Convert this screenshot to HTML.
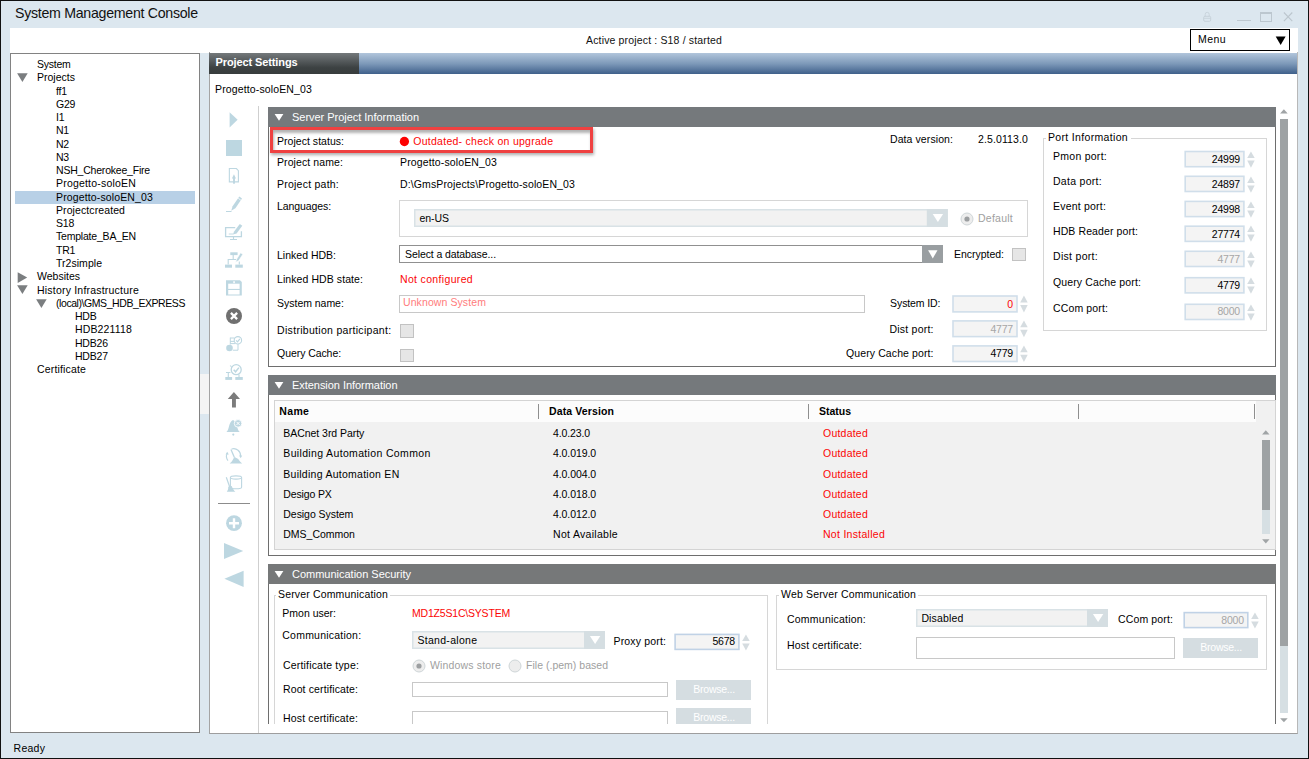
<!DOCTYPE html>
<html><head><meta charset="utf-8"><title>System Management Console</title>
<style>
html,body{margin:0;padding:0;}
body{width:1309px;height:759px;overflow:hidden;position:relative;background:#dce7ef;font-family:"Liberation Sans",sans-serif;}
div,svg{position:absolute;box-sizing:border-box;}
.t{white-space:nowrap;}
</style></head><body>
<div style="left:0px;top:0px;width:1309px;height:759px;background:#dce7ef;"></div>
<div style="left:0px;top:0px;width:1309px;height:1.1px;background:#111;"></div>
<div style="left:0px;top:0px;width:1.3px;height:759px;background:#111;"></div>
<div style="left:1307.6px;top:0px;width:1.4px;height:759px;background:#111;"></div>
<div style="left:0px;top:757.6px;width:1309px;height:1.4px;background:#111;"></div>
<div style="left:10px;top:28px;width:1288px;height:25px;background:#fff;"></div>
<div class="t" style="top:6.28px;line-height:14px;font-size:14.2px;letter-spacing:-0.289px;color:#111;left:15px;">System Management Console</div>
<div class="t" style="top:32.96px;line-height:14px;font-size:10.5px;letter-spacing:0.156px;color:#111;left:586px;">Active project : S18 / started</div>
<div style="left:1190px;top:29px;width:100px;height:22px;background:#fff;border:1px solid #000;"></div>
<div class="t" style="top:31.86px;line-height:14px;font-size:10.5px;letter-spacing:0.433px;color:#000;left:1198px;">Menu</div>
<svg style="left:1275px;top:35.5px" width="12" height="10" viewBox="0 0 12 10"><path d="M0.7 0.4 L10.6 0.4 L5.65 9 Z" fill="#000"/></svg>
<svg style="left:1202px;top:11px" width="11" height="12" viewBox="0 0 11 12"><rect x="1.7" y="5.3" width="7" height="5" rx="1.2" fill="none" stroke="#c7d2da" stroke-width="1"/><path d="M3.2 5.3 V3.4 a2 2.1 0 0 1 4 0 V5.3 M1.7 7.3 H8.7" fill="none" stroke="#c7d2da" stroke-width="0.9"/></svg>
<div style="left:1237.2px;top:19.6px;width:13.6px;height:1.9px;background:#bec8d0;"></div>
<div style="left:1259.8px;top:12.3px;width:12.1px;height:9.3px;border:1px solid #bcc7cf;border-top-width:2.4px;"></div>
<svg style="left:1283px;top:12px" width="11" height="11" viewBox="0 0 11 11"><path d="M0.9 0.5 L9.3 9.2 M9.3 0.5 L0.9 9.2" stroke="#bcc6ce" stroke-width="1.1" fill="none"/></svg>
<div style="left:10px;top:53px;width:190px;height:680px;background:#fff;border:1px solid #828282;"></div>
<div class="t" style="top:56.96px;line-height:14px;font-size:10.5px;letter-spacing:-0.251px;color:#000;left:37px;">System</div>
<div class="t" style="top:70.23px;line-height:14px;font-size:10.5px;letter-spacing:0.009px;color:#000;left:37px;">Projects</div>
<svg style="left:17px;top:73.07px" width="12" height="10" viewBox="0 0 12 10"><path d="M0.1 0.2 L10.7 0.2 L5.4 9.1 Z" fill="#7b7e80"/></svg>
<div class="t" style="top:83.50px;line-height:14px;font-size:10.5px;letter-spacing:-0.220px;color:#000;left:56px;">ff1</div>
<div class="t" style="top:96.77px;line-height:14px;font-size:10.5px;letter-spacing:-0.220px;color:#000;left:56px;">G29</div>
<div class="t" style="top:110.04px;line-height:14px;font-size:10.5px;letter-spacing:-0.220px;color:#000;left:56px;">I1</div>
<div class="t" style="top:123.31px;line-height:14px;font-size:10.5px;letter-spacing:-0.220px;color:#000;left:56px;">N1</div>
<div class="t" style="top:136.58px;line-height:14px;font-size:10.5px;letter-spacing:-0.220px;color:#000;left:56px;">N2</div>
<div class="t" style="top:149.85px;line-height:14px;font-size:10.5px;letter-spacing:-0.220px;color:#000;left:56px;">N3</div>
<div class="t" style="top:163.12px;line-height:14px;font-size:10.5px;letter-spacing:-0.204px;color:#000;left:56px;">NSH_Cherokee_Fire</div>
<div class="t" style="top:176.39px;line-height:14px;font-size:10.5px;letter-spacing:0.197px;color:#000;left:56px;">Progetto-soloEN</div>
<div style="left:15px;top:190.89999999999998px;width:180.2px;height:13.1px;background:#b8d0e6;"></div>
<div class="t" style="top:189.66px;line-height:14px;font-size:10.5px;letter-spacing:0.136px;color:#000;left:56px;">Progetto-soloEN_03</div>
<div class="t" style="top:202.93px;line-height:14px;font-size:10.5px;letter-spacing:0.093px;color:#000;left:56px;">Projectcreated</div>
<div class="t" style="top:216.20px;line-height:14px;font-size:10.5px;letter-spacing:-0.220px;color:#000;left:56px;">S18</div>
<div class="t" style="top:229.47px;line-height:14px;font-size:10.5px;letter-spacing:-0.206px;color:#000;left:56px;">Template_BA_EN</div>
<div class="t" style="top:242.74px;line-height:14px;font-size:10.5px;letter-spacing:-0.220px;color:#000;left:56px;">TR1</div>
<div class="t" style="top:256.01px;line-height:14px;font-size:10.5px;letter-spacing:0.033px;color:#000;left:56px;">Tr2simple</div>
<div class="t" style="top:269.28px;line-height:14px;font-size:10.5px;letter-spacing:0.001px;color:#000;left:37px;">Websites</div>
<svg style="left:17px;top:272.31999999999994px" width="11" height="12" viewBox="0 0 11 12"><path d="M0.7 0.2 L10.2 5.5 L0.7 10.9 Z" fill="#7b7e80"/></svg>
<div class="t" style="top:282.55px;line-height:14px;font-size:10.5px;letter-spacing:0.207px;color:#000;left:37px;">History Infrastructure</div>
<svg style="left:17px;top:285.39px" width="12" height="10" viewBox="0 0 12 10"><path d="M0.1 0.2 L10.7 0.2 L5.4 9.1 Z" fill="#7b7e80"/></svg>
<div class="t" style="top:295.82px;line-height:14px;font-size:10.5px;letter-spacing:-0.430px;color:#000;left:56px;">(local)\GMS_HDB_EXPRESS</div>
<svg style="left:36px;top:298.65999999999997px" width="12" height="10" viewBox="0 0 12 10"><path d="M0.1 0.2 L10.7 0.2 L5.4 9.1 Z" fill="#7b7e80"/></svg>
<div class="t" style="top:309.09px;line-height:14px;font-size:10.5px;letter-spacing:-0.220px;color:#000;left:75px;">HDB</div>
<div class="t" style="top:322.36px;line-height:14px;font-size:10.5px;letter-spacing:0.150px;color:#000;left:75px;">HDB221118</div>
<div class="t" style="top:335.63px;line-height:14px;font-size:10.5px;letter-spacing:-0.220px;color:#000;left:75px;">HDB26</div>
<div class="t" style="top:348.90px;line-height:14px;font-size:10.5px;letter-spacing:-0.220px;color:#000;left:75px;">HDB27</div>
<div class="t" style="top:362.17px;line-height:14px;font-size:10.5px;letter-spacing:0.158px;color:#000;left:37px;">Certificate</div>
<div style="left:200px;top:374px;width:9px;height:39.7px;background:#f4f4f4;"></div>
<div style="left:209px;top:52px;width:1089px;height:682px;background:#fff;border:1px solid #9e9e9e;border-top:none;border-left-color:#a4a4a4;border-right-color:#b8b8b8;"></div>
<div style="left:209px;top:52.5px;width:1088px;height:21.5px;background:linear-gradient(#b1c5db 0%,#7c98b8 52%,#3f608b 100%);"></div>
<div style="left:209px;top:52.5px;width:150px;height:21.5px;background:linear-gradient(#74797b 0%,#585d5f 35%,#3c4142 70%,#383d3d 100%);"></div>
<div class="t" style="top:55.39px;line-height:14px;font-size:11px;letter-spacing:-0.109px;color:#fff;font-weight:bold;left:215.5px;">Project Settings</div>
<div class="t" style="top:82.26px;line-height:14px;font-size:10.5px;letter-spacing:0.136px;color:#000;left:215px;">Progetto-soloEN_03</div>
<div style="left:258px;top:106px;width:1px;height:627px;background:#cfcfcf;"></div>
<div style="left:1280.2px;top:119px;width:7.7px;height:526.6px;background:#9ea2a4;"></div>
<div style="left:1280.2px;top:645.6px;width:7.7px;height:67px;background:#d6dfe3;"></div>
<svg style="left:1280px;top:108.6px" width="8" height="5" viewBox="0 0 8 5"><path d="M0.1 4.6 L3.9 0.3 L7.7 4.6 Z" fill="#a0a4a6"/></svg>
<svg style="left:1280px;top:718px" width="8" height="5" viewBox="0 0 8 5"><path d="M0.1 0.3 L3.9 4.3 L7.7 0.3 Z" fill="#a0a4a6"/></svg>
<div class="t" style="top:740.66px;line-height:14px;font-size:10.5px;letter-spacing:0.250px;color:#000;left:13.6px;">Ready</div>
<div style="left:268px;top:107px;width:1008px;height:20px;background:#75797c;"></div>
<svg style="left:274px;top:113px" width="11" height="9" viewBox="0 0 11 9"><path d="M0.6 1 L9.4 1 L5 7.8 Z" fill="#fff"/></svg>
<div class="t" style="top:109.89px;line-height:14px;font-size:11px;letter-spacing:-0.030px;color:#fff;left:292px;">Server Project Information</div>
<div style="left:268px;top:127px;width:1008px;height:240px;background:#fff;border:1px solid #6e6e6e;border-top:none;"></div>
<div style="left:270px;top:127px;width:323px;height:26px;background:#fff;border:3px solid #ef4141;box-shadow:inset 1px 3px 3px rgba(0,0,0,.30), 1px 2px 3px rgba(0,0,0,.32);"></div>
<div class="t" style="top:134.36px;line-height:14px;font-size:10.5px;letter-spacing:0.031px;color:#000;left:277px;">Project status:</div>
<svg style="left:399px;top:136px" width="11" height="11" viewBox="0 0 11 11"><circle cx="5.4" cy="5.5" r="4.65" fill="#fd0202"/></svg>
<div class="t" style="top:134.36px;line-height:14px;font-size:10.5px;letter-spacing:0.266px;color:#fb0505;left:413.3px;">Outdated- check on upgrade</div>
<div class="t" style="top:154.86px;line-height:14px;font-size:10.5px;letter-spacing:0.094px;color:#000;left:277px;">Project name:</div>
<div class="t" style="top:154.86px;line-height:14px;font-size:10.5px;letter-spacing:0.136px;color:#000;left:400px;">Progetto-soloEN_03</div>
<div class="t" style="top:176.76px;line-height:14px;font-size:10.5px;letter-spacing:0.235px;color:#000;left:277px;">Project path:</div>
<div class="t" style="top:176.76px;line-height:14px;font-size:10.5px;letter-spacing:0.122px;color:#000;left:400px;">D:\GmsProjects\Progetto-soloEN_03</div>
<div class="t" style="top:199.16px;line-height:14px;font-size:10.5px;letter-spacing:-0.089px;color:#000;left:277px;">Languages:</div>
<div style="left:399px;top:200px;width:628.5px;height:36.5px;background:#fff;border:1px solid #d6d6d6;"></div>
<svg style="left:414px;top:209px" width="534" height="18" viewBox="0 0 534 18"><rect x="0.00" y="0.00" width="533.80" height="18.00" fill="#d9e2e6"/><rect x="1.50" y="1.50" width="530.80" height="15.00" fill="#f2f2f2"/><rect x="512.80" y="0" width="21" height="18.00" fill="#d5dee2"/><path d="M518.70 5.00 L529.10 5.00 L523.90 13.00 Z" fill="#fff"/></svg>
<div class="t" style="top:211.06px;line-height:14px;font-size:10.5px;letter-spacing:-0.033px;color:#000;left:419.4px;">en-US</div>
<svg style="left:959.5px;top:211.5px" width="14" height="14" viewBox="0 0 14 14"><circle cx="7" cy="7" r="6" fill="#ededed" stroke="#cfd6d8" stroke-width="1"/><circle cx="7" cy="7" r="2.6" fill="#9c9fa1"/></svg>
<div class="t" style="top:211.36px;line-height:14px;font-size:10.5px;letter-spacing:0.247px;color:#a0a0a0;left:978px;">Default</div>
<div class="t" style="top:247.96px;line-height:14px;font-size:10.5px;letter-spacing:0.005px;color:#000;left:277px;">Linked HDB:</div>
<div style="left:399px;top:245px;width:544px;height:18px;background:#fff;border:1px solid #909090;"></div>
<div style="left:922.4px;top:245px;width:20.6px;height:18px;background:#999ea1;"></div>
<svg style="left:928px;top:249.6px" width="10" height="9" viewBox="0 0 10 9"><path d="M0.1 0.2 L9.5 0.2 L4.8 8.5 Z" fill="#fff"/></svg>
<div class="t" style="top:246.96px;line-height:14px;font-size:10.5px;letter-spacing:-0.091px;color:#000;left:405px;">Select a database...</div>
<div class="t" style="top:247.36px;line-height:14px;font-size:10.5px;letter-spacing:-0.019px;color:#000;left:954px;">Encrypted:</div>
<div style="left:1012px;top:248px;width:14px;height:13px;background:#e6e6e6;border:1px solid #c2c2c2;"></div>
<div class="t" style="top:272.16px;line-height:14px;font-size:10.5px;letter-spacing:0.081px;color:#000;left:277px;">Linked HDB state:</div>
<div class="t" style="top:272.16px;line-height:14px;font-size:10.5px;letter-spacing:0.336px;color:#fb0505;left:400px;">Not configured</div>
<div class="t" style="top:296.16px;line-height:14px;font-size:10.5px;letter-spacing:-0.034px;color:#000;left:277.1px;">System name:</div>
<div style="left:399px;top:295px;width:466px;height:17.5px;background:#fff;border:1px solid #c8c8c8;"></div>
<div class="t" style="top:295.36px;line-height:14px;font-size:10.5px;letter-spacing:0.093px;color:#ff7c7c;left:403px;">Unknown System</div>
<div class="t" style="top:296.26px;line-height:14px;font-size:10.5px;letter-spacing:-0.104px;color:#000;right:368.60px;">System ID:</div>
<svg style="left:952px;top:295px" width="66" height="18" viewBox="0 0 66 18"><rect x="0.20" y="0.20" width="65.60" height="17.50" fill="#d0deea"/><rect x="1.80" y="1.80" width="62.40" height="14.30" fill="#f4f4f4"/></svg>
<div class="t" style="top:297.16px;line-height:14px;font-size:10.5px;letter-spacing:-0.220px;color:#fb0505;right:296.02px;">0</div>
<svg style="left:1019.7px;top:295.2px" width="9" height="18.5" viewBox="0 0 9 18.5"><path d="M0.2 7.45 L3.95 0.5 L7.7 7.45 Z" fill="#d5dce0"/><path d="M0.2 9.95 L3.95 17.40 L7.7 9.95 Z" fill="#d5dce0"/></svg>
<div class="t" style="top:322.76px;line-height:14px;font-size:10.5px;letter-spacing:0.300px;color:#000;left:277.1px;">Distribution participant:</div>
<div style="left:400px;top:324px;width:14px;height:14px;background:#e6e6e6;border:1px solid #c2c2c2;"></div>
<div class="t" style="top:322.06px;line-height:14px;font-size:10.5px;letter-spacing:0.229px;color:#000;right:375.27px;">Dist port:</div>
<svg style="left:952px;top:320px" width="66" height="18" viewBox="0 0 66 18"><rect x="0.20" y="0.10" width="65.60" height="17.30" fill="#d0deea"/><rect x="1.80" y="1.70" width="62.40" height="14.10" fill="#f4f4f4"/></svg>
<div class="t" style="top:322.06px;line-height:14px;font-size:10.5px;letter-spacing:-0.220px;color:#a6a6a6;right:296.02px;">4777</div>
<svg style="left:1019.7px;top:320.1px" width="9" height="18.3" viewBox="0 0 9 18.3"><path d="M0.2 7.35 L3.95 0.5 L7.7 7.35 Z" fill="#d5dce0"/><path d="M0.2 9.85 L3.95 17.20 L7.7 9.85 Z" fill="#d5dce0"/></svg>
<div class="t" style="top:346.26px;line-height:14px;font-size:10.5px;letter-spacing:-0.073px;color:#000;left:277.1px;">Query Cache:</div>
<div style="left:400px;top:349px;width:14px;height:13px;background:#e6e6e6;border:1px solid #c2c2c2;"></div>
<div class="t" style="top:346.06px;line-height:14px;font-size:10.5px;letter-spacing:0.106px;color:#000;right:375.39px;">Query Cache port:</div>
<svg style="left:952px;top:345px" width="66" height="18" viewBox="0 0 66 18"><rect x="0.20" y="0.10" width="65.60" height="17.20" fill="#d0deea"/><rect x="1.80" y="1.70" width="62.40" height="14.00" fill="#f4f4f4"/></svg>
<div class="t" style="top:346.06px;line-height:14px;font-size:10.5px;letter-spacing:-0.220px;color:#000;right:296.02px;">4779</div>
<svg style="left:1019.7px;top:345.1px" width="9" height="18.2" viewBox="0 0 9 18.2"><path d="M0.2 7.30 L3.95 0.5 L7.7 7.30 Z" fill="#d5dce0"/><path d="M0.2 9.80 L3.95 17.10 L7.7 9.80 Z" fill="#d5dce0"/></svg>
<div class="t" style="top:131.66px;line-height:14px;font-size:10.5px;letter-spacing:0.087px;color:#000;left:890px;">Data version:</div>
<div class="t" style="top:131.66px;line-height:14px;font-size:10.5px;letter-spacing:0.115px;color:#000;left:978px;">2.5.0113.0</div>
<div style="left:1043px;top:138px;width:224px;height:193px;border:1px solid #d6d6d6;"></div>
<div style="left:1046px;top:131px;width:85px;height:12px;background:#fff;"></div>
<div class="t" style="top:129.86px;line-height:14px;font-size:10.5px;letter-spacing:0.331px;color:#000;left:1048px;">Port Information</div>
<div class="t" style="top:148.76px;line-height:14px;font-size:10.5px;letter-spacing:0.264px;color:#000;left:1053px;">Pmon port:</div>
<svg style="left:1184px;top:150px" width="61" height="18" viewBox="0 0 61 18"><rect x="0.40" y="0.70" width="60.30" height="16.80" fill="#d0deea"/><rect x="2.00" y="2.30" width="57.10" height="13.60" fill="#f4f4f4"/></svg>
<div class="t" style="top:152.26px;line-height:14px;font-size:10.5px;letter-spacing:-0.220px;color:#000;right:69.12px;">24999</div>
<svg style="left:1246.6000000000001px;top:150.70000000000002px" width="9" height="17.8" viewBox="0 0 9 17.8"><path d="M0.2 7.10 L3.95 0.5 L7.7 7.10 Z" fill="#d5dce0"/><path d="M0.2 9.60 L3.95 16.70 L7.7 9.60 Z" fill="#d5dce0"/></svg>
<div class="t" style="top:173.96px;line-height:14px;font-size:10.5px;letter-spacing:0.289px;color:#000;left:1053px;">Data port:</div>
<svg style="left:1184px;top:175px" width="61" height="18" viewBox="0 0 61 18"><rect x="0.40" y="0.50" width="60.30" height="16.80" fill="#d0deea"/><rect x="2.00" y="2.10" width="57.10" height="13.60" fill="#f4f4f4"/></svg>
<div class="t" style="top:177.26px;line-height:14px;font-size:10.5px;letter-spacing:-0.220px;color:#000;right:69.12px;">24897</div>
<svg style="left:1246.6000000000001px;top:175.5px" width="9" height="17.8" viewBox="0 0 9 17.8"><path d="M0.2 7.10 L3.95 0.5 L7.7 7.10 Z" fill="#d5dce0"/><path d="M0.2 9.60 L3.95 16.70 L7.7 9.60 Z" fill="#d5dce0"/></svg>
<div class="t" style="top:198.96px;line-height:14px;font-size:10.5px;letter-spacing:0.202px;color:#000;left:1053px;">Event port:</div>
<svg style="left:1184px;top:200px" width="61" height="18" viewBox="0 0 61 18"><rect x="0.40" y="0.60" width="60.30" height="16.80" fill="#d0deea"/><rect x="2.00" y="2.20" width="57.10" height="13.60" fill="#f4f4f4"/></svg>
<div class="t" style="top:201.86px;line-height:14px;font-size:10.5px;letter-spacing:-0.220px;color:#000;right:69.12px;">24998</div>
<svg style="left:1246.6000000000001px;top:200.6px" width="9" height="17.8" viewBox="0 0 9 17.8"><path d="M0.2 7.10 L3.95 0.5 L7.7 7.10 Z" fill="#d5dce0"/><path d="M0.2 9.60 L3.95 16.70 L7.7 9.60 Z" fill="#d5dce0"/></svg>
<div class="t" style="top:224.26px;line-height:14px;font-size:10.5px;letter-spacing:0.097px;color:#000;left:1053px;">HDB Reader port:</div>
<svg style="left:1184px;top:225px" width="61" height="18" viewBox="0 0 61 18"><rect x="0.40" y="0.40" width="60.30" height="16.80" fill="#d0deea"/><rect x="2.00" y="2.00" width="57.10" height="13.60" fill="#f4f4f4"/></svg>
<div class="t" style="top:227.16px;line-height:14px;font-size:10.5px;letter-spacing:-0.220px;color:#000;right:69.12px;">27774</div>
<svg style="left:1246.6000000000001px;top:225.4px" width="9" height="17.8" viewBox="0 0 9 17.8"><path d="M0.2 7.10 L3.95 0.5 L7.7 7.10 Z" fill="#d5dce0"/><path d="M0.2 9.60 L3.95 16.70 L7.7 9.60 Z" fill="#d5dce0"/></svg>
<div class="t" style="top:249.36px;line-height:14px;font-size:10.5px;letter-spacing:0.299px;color:#000;left:1053px;">Dist port:</div>
<svg style="left:1184px;top:250px" width="61" height="18" viewBox="0 0 61 18"><rect x="0.40" y="0.50" width="60.30" height="16.80" fill="#d0deea"/><rect x="2.00" y="2.10" width="57.10" height="13.60" fill="#f4f4f4"/></svg>
<div class="t" style="top:252.26px;line-height:14px;font-size:10.5px;letter-spacing:-0.220px;color:#a6a6a6;right:69.12px;">4777</div>
<svg style="left:1246.6000000000001px;top:250.5px" width="9" height="17.8" viewBox="0 0 9 17.8"><path d="M0.2 7.10 L3.95 0.5 L7.7 7.10 Z" fill="#d5dce0"/><path d="M0.2 9.60 L3.95 16.70 L7.7 9.60 Z" fill="#d5dce0"/></svg>
<div class="t" style="top:275.36px;line-height:14px;font-size:10.5px;letter-spacing:0.130px;color:#000;left:1053px;">Query Cache port:</div>
<svg style="left:1184px;top:276px" width="61" height="18" viewBox="0 0 61 18"><rect x="0.40" y="0.90" width="60.30" height="16.80" fill="#d0deea"/><rect x="2.00" y="2.50" width="57.10" height="13.60" fill="#f4f4f4"/></svg>
<div class="t" style="top:277.96px;line-height:14px;font-size:10.5px;letter-spacing:-0.220px;color:#000;right:69.12px;">4779</div>
<svg style="left:1246.6000000000001px;top:276.9px" width="9" height="17.8" viewBox="0 0 9 17.8"><path d="M0.2 7.10 L3.95 0.5 L7.7 7.10 Z" fill="#d5dce0"/><path d="M0.2 9.60 L3.95 16.70 L7.7 9.60 Z" fill="#d5dce0"/></svg>
<div class="t" style="top:301.06px;line-height:14px;font-size:10.5px;letter-spacing:0.132px;color:#000;left:1053px;">CCom port:</div>
<svg style="left:1184px;top:303px" width="61" height="18" viewBox="0 0 61 18"><rect x="0.40" y="0.50" width="60.30" height="16.80" fill="#d0deea"/><rect x="2.00" y="2.10" width="57.10" height="13.60" fill="#f4f4f4"/></svg>
<div class="t" style="top:303.76px;line-height:14px;font-size:10.5px;letter-spacing:-0.220px;color:#a6a6a6;right:69.12px;">8000</div>
<svg style="left:1246.6000000000001px;top:303.5px" width="9" height="17.8" viewBox="0 0 9 17.8"><path d="M0.2 7.10 L3.95 0.5 L7.7 7.10 Z" fill="#d5dce0"/><path d="M0.2 9.60 L3.95 16.70 L7.7 9.60 Z" fill="#d5dce0"/></svg>
<div style="left:268px;top:375px;width:1008px;height:20px;background:#75797c;"></div>
<svg style="left:274px;top:381px" width="11" height="9" viewBox="0 0 11 9"><path d="M0.6 1 L9.4 1 L5 7.8 Z" fill="#fff"/></svg>
<div class="t" style="top:377.89px;line-height:14px;font-size:11px;letter-spacing:-0.043px;color:#fff;left:292px;">Extension Information</div>
<div style="left:268px;top:395px;width:1008px;height:161px;background:#fff;border:1px solid #6e6e6e;border-top:none;"></div>
<div style="left:274px;top:400px;width:1001.5px;height:149.5px;background:#f1f1f1;border:1px solid #d4d4d4;"></div>
<div style="left:275px;top:401px;width:980.5px;height:21px;background:#fcfcfc;"></div>
<div style="left:538px;top:404px;width:1px;height:15px;background:#8f8f8f;"></div>
<div style="left:808px;top:404px;width:1px;height:15px;background:#8f8f8f;"></div>
<div style="left:1078px;top:404px;width:1px;height:15px;background:#8f8f8f;"></div>
<div style="left:1254px;top:404px;width:1px;height:15px;background:#8f8f8f;"></div>
<div class="t" style="top:404.36px;line-height:14px;font-size:10.5px;letter-spacing:0.350px;color:#000;font-weight:bold;left:279.3px;">Name</div>
<div class="t" style="top:404.36px;line-height:14px;font-size:10.5px;letter-spacing:0.116px;color:#000;font-weight:bold;left:549px;">Data Version</div>
<div class="t" style="top:404.36px;line-height:14px;font-size:10.5px;letter-spacing:-0.015px;color:#000;font-weight:bold;left:819px;">Status</div>
<div class="t" style="top:426.26px;line-height:14px;font-size:10.5px;letter-spacing:-0.044px;color:#000;left:283.3px;">BACnet 3rd Party</div>
<div class="t" style="top:426.26px;line-height:14px;font-size:10.5px;letter-spacing:-0.119px;color:#000;left:553px;">4.0.23.0</div>
<div class="t" style="top:426.26px;line-height:14px;font-size:10.5px;letter-spacing:0.225px;color:#fb0505;left:823px;">Outdated</div>
<div class="t" style="top:446.16px;line-height:14px;font-size:10.5px;letter-spacing:0.345px;color:#000;left:283.3px;">Building Automation Common</div>
<div class="t" style="top:446.16px;line-height:14px;font-size:10.5px;letter-spacing:-0.088px;color:#000;left:553px;">4.0.019.0</div>
<div class="t" style="top:446.16px;line-height:14px;font-size:10.5px;letter-spacing:0.225px;color:#fb0505;left:823px;">Outdated</div>
<div class="t" style="top:466.86px;line-height:14px;font-size:10.5px;letter-spacing:0.267px;color:#000;left:283.3px;">Building Automation EN</div>
<div class="t" style="top:466.86px;line-height:14px;font-size:10.5px;letter-spacing:-0.088px;color:#000;left:553px;">4.0.004.0</div>
<div class="t" style="top:466.86px;line-height:14px;font-size:10.5px;letter-spacing:0.225px;color:#fb0505;left:823px;">Outdated</div>
<div class="t" style="top:487.16px;line-height:14px;font-size:10.5px;letter-spacing:-0.134px;color:#000;left:283.3px;">Desigo PX</div>
<div class="t" style="top:487.16px;line-height:14px;font-size:10.5px;letter-spacing:-0.088px;color:#000;left:553px;">4.0.018.0</div>
<div class="t" style="top:487.16px;line-height:14px;font-size:10.5px;letter-spacing:0.225px;color:#fb0505;left:823px;">Outdated</div>
<div class="t" style="top:507.36px;line-height:14px;font-size:10.5px;letter-spacing:-0.047px;color:#000;left:283.3px;">Desigo System</div>
<div class="t" style="top:507.36px;line-height:14px;font-size:10.5px;letter-spacing:-0.088px;color:#000;left:553px;">4.0.012.0</div>
<div class="t" style="top:507.36px;line-height:14px;font-size:10.5px;letter-spacing:0.225px;color:#fb0505;left:823px;">Outdated</div>
<div class="t" style="top:527.06px;line-height:14px;font-size:10.5px;letter-spacing:-0.017px;color:#000;left:283.3px;">DMS_Common</div>
<div class="t" style="top:527.06px;line-height:14px;font-size:10.5px;letter-spacing:0.300px;color:#000;left:553px;">Not Available</div>
<div class="t" style="top:527.06px;line-height:14px;font-size:10.5px;letter-spacing:0.280px;color:#fb0505;left:823px;">Not Installed</div>
<div style="left:1262px;top:440px;width:7.6px;height:69.5px;background:#9ea2a4;"></div>
<div style="left:1262px;top:509.5px;width:7.6px;height:24.3px;background:#d6dfe3;"></div>
<svg style="left:1262px;top:429.6px" width="8" height="5" viewBox="0 0 8 5"><path d="M0.1 4.4 L3.8 0.3 L7.5 4.4 Z" fill="#a0a4a6"/></svg>
<svg style="left:1262px;top:538.6px" width="8" height="5" viewBox="0 0 8 5"><path d="M0.1 0.3 L3.8 4.4 L7.5 0.3 Z" fill="#a0a4a6"/></svg>
<div style="left:268px;top:564px;width:1008px;height:20px;background:#767879;"></div>
<svg style="left:274px;top:570px" width="11" height="9" viewBox="0 0 11 9"><path d="M0.6 1 L9.4 1 L5 7.8 Z" fill="#fff"/></svg>
<div class="t" style="top:566.89px;line-height:14px;font-size:11px;letter-spacing:-0.010px;color:#fff;left:292px;">Communication Security</div>
<div style="left:268px;top:584px;width:1px;height:140.3px;background:#6e6e6e;"></div>
<div style="left:1275px;top:584px;width:1px;height:140.3px;background:#6e6e6e;"></div>
<div style="left:273.6px;top:595px;width:494.4px;height:130px;border:1px solid #d6d6d6;border-bottom:none;"></div>
<div style="left:276px;top:588px;width:114px;height:12px;background:#fff;"></div>
<div class="t" style="top:587.36px;line-height:14px;font-size:10.5px;letter-spacing:0.160px;color:#000;left:278px;">Server Communication</div>
<div class="t" style="top:605.76px;line-height:14px;font-size:10.5px;letter-spacing:0.001px;color:#000;left:282.3px;">Pmon user:</div>
<div class="t" style="top:606.16px;line-height:14px;font-size:10.5px;letter-spacing:-0.196px;color:#fb0505;left:412px;">MD1Z5S1C\SYSTEM</div>
<div class="t" style="top:627.86px;line-height:14px;font-size:10.5px;letter-spacing:0.224px;color:#000;left:282.3px;">Communication:</div>
<svg style="left:412px;top:631px" width="193" height="18" viewBox="0 0 193 18"><rect x="0.00" y="0.00" width="193.00" height="18.00" fill="#d9e2e6"/><rect x="1.50" y="1.50" width="190.00" height="15.00" fill="#f2f2f2"/><rect x="172.00" y="0" width="21" height="18.00" fill="#d5dee2"/><path d="M177.90 5.00 L188.30 5.00 L183.10 13.00 Z" fill="#fff"/></svg>
<div class="t" style="top:633.06px;line-height:14px;font-size:10.5px;letter-spacing:0.306px;color:#000;left:417.4px;">Stand-alone</div>
<div class="t" style="top:633.66px;line-height:14px;font-size:10.5px;letter-spacing:0.176px;color:#000;left:613.5px;">Proxy port:</div>
<svg style="left:674px;top:633px" width="66" height="18" viewBox="0 0 66 18"><rect x="0.30" y="0.60" width="65.40" height="16.60" fill="#c0d2e6"/><rect x="1.90" y="2.20" width="62.20" height="13.40" fill="#f4f4f4"/></svg>
<div class="t" style="top:633.86px;line-height:14px;font-size:10.5px;letter-spacing:-0.220px;color:#000;right:574.12px;">5678</div>
<svg style="left:741.5999999999999px;top:633.6px" width="9" height="17.6" viewBox="0 0 9 17.6"><path d="M0.2 7.00 L3.95 0.5 L7.7 7.00 Z" fill="#d5dce0"/><path d="M0.2 9.50 L3.95 16.50 L7.7 9.50 Z" fill="#d5dce0"/></svg>
<div class="t" style="top:657.96px;line-height:14px;font-size:10.5px;letter-spacing:0.180px;color:#000;left:283px;">Certificate type:</div>
<svg style="left:411.5px;top:658.5px" width="14" height="14" viewBox="0 0 14 14"><circle cx="7" cy="7" r="6" fill="#ededed" stroke="#cfd6d8" stroke-width="1"/><circle cx="7" cy="7" r="2.6" fill="#9c9fa1"/></svg>
<div class="t" style="top:657.96px;line-height:14px;font-size:10.5px;letter-spacing:0.165px;color:#a0a0a0;left:430px;">Windows store</div>
<svg style="left:507.5px;top:658.5px" width="14" height="14" viewBox="0 0 14 14"><circle cx="7" cy="7" r="6" fill="#ededed" stroke="#cfd6d8" stroke-width="1"/></svg>
<div class="t" style="top:657.96px;line-height:14px;font-size:10.5px;letter-spacing:0.018px;color:#a0a0a0;left:526px;">File (.pem) based</div>
<div class="t" style="top:681.96px;line-height:14px;font-size:10.5px;letter-spacing:0.121px;color:#000;left:283px;">Root certificate:</div>
<div style="left:412px;top:682px;width:256px;height:15px;background:#fff;border:1px solid #c8c8c8;"></div>
<div style="left:676px;top:680px;width:75px;height:20px;background:#d5dde1;"></div>
<div class="t" style="top:682.36px;line-height:14px;font-size:10.5px;letter-spacing:-0.252px;color:#fff;left:693.3px;">Browse...</div>
<div class="t" style="top:710.86px;line-height:14px;font-size:10.5px;letter-spacing:0.155px;color:#000;left:283px;">Host certificate:</div>
<div style="left:412px;top:711px;width:256px;height:15px;background:#fff;border:1px solid #c8c8c8;border-bottom:none;height:14px;"></div>
<div style="left:676px;top:708px;width:75px;height:20px;background:#d5dde1;"></div>
<div class="t" style="top:710.36px;line-height:14px;font-size:10.5px;letter-spacing:-0.252px;color:#fff;left:693.3px;">Browse...</div>
<div style="left:776px;top:595px;width:491px;height:74.5px;border:1px solid #d6d6d6;"></div>
<div style="left:779px;top:588px;width:139px;height:12px;background:#fff;"></div>
<div class="t" style="top:587.36px;line-height:14px;font-size:10.5px;letter-spacing:0.162px;color:#000;left:781px;">Web Server Communication</div>
<div class="t" style="top:612.16px;line-height:14px;font-size:10.5px;letter-spacing:0.224px;color:#000;left:787px;">Communication:</div>
<svg style="left:916px;top:609px" width="192" height="18" viewBox="0 0 192 18"><rect x="0.00" y="0.00" width="192.00" height="18.00" fill="#d9e2e6"/><rect x="1.50" y="1.50" width="189.00" height="15.00" fill="#f2f2f2"/><rect x="171.00" y="0" width="21" height="18.00" fill="#d5dee2"/><path d="M176.90 5.00 L187.30 5.00 L182.10 13.00 Z" fill="#fff"/></svg>
<div class="t" style="top:611.06px;line-height:14px;font-size:10.5px;letter-spacing:0.143px;color:#000;left:921.4px;">Disabled</div>
<div class="t" style="top:612.16px;line-height:14px;font-size:10.5px;letter-spacing:0.132px;color:#000;left:1118px;">CCom port:</div>
<svg style="left:1183px;top:611px" width="66" height="18" viewBox="0 0 66 18"><rect x="0.40" y="0.80" width="65.20" height="16.60" fill="#c0d2e6"/><rect x="2.00" y="2.40" width="62.00" height="13.40" fill="#f4f4f4"/></svg>
<div class="t" style="top:613.06px;line-height:14px;font-size:10.5px;letter-spacing:-0.220px;color:#a6a6a6;right:65.22px;">8000</div>
<svg style="left:1250.5000000000002px;top:611.8px" width="9" height="17.6" viewBox="0 0 9 17.6"><path d="M0.2 7.00 L3.95 0.5 L7.7 7.00 Z" fill="#d5dce0"/><path d="M0.2 9.50 L3.95 16.50 L7.7 9.50 Z" fill="#d5dce0"/></svg>
<div class="t" style="top:637.96px;line-height:14px;font-size:10.5px;letter-spacing:0.155px;color:#000;left:787px;">Host certificate:</div>
<div style="left:916px;top:637px;width:259px;height:22px;background:#fff;border:1px solid #c8c8c8;"></div>
<div style="left:1183px;top:638px;width:75px;height:20px;background:#d5dde1;"></div>
<div class="t" style="top:640.36px;line-height:14px;font-size:10.5px;letter-spacing:-0.252px;color:#fff;left:1200.3px;">Browse...</div>
<div style="left:259px;top:724.3px;width:1020px;height:8.7px;background:#fff;"></div>
<div style="left:218px;top:503px;width:32px;height:1px;background:#8c8c8c;"></div>
<svg style="left:222px;top:108px" width="24" height="24" viewBox="0 0 24 24"><path d="M7.6 4.2 L15.6 11.8 L7.6 19.4 Z" fill="#bdd7e1"/></svg>
<div style="left:226px;top:140px;width:16px;height:16px;background:#bdd7e1;"></div>
<svg style="left:222px;top:164px" width="24" height="24" viewBox="0 0 24 24"><path d="M7.35 4.5 H14.4 L16.4 6.6 V17.9 H7.35 Z" fill="none" stroke="#bdd7e1" stroke-width="1.1"/><path d="M9.9 14.6 L11.95 10.2 L14 14.6 Z" fill="#bdd7e1"/><rect x="11.05" y="14" width="1.9" height="5.7" fill="#bdd7e1"/></svg>
<svg style="left:222px;top:192px" width="24" height="24" viewBox="0 0 24 24"><path d="M4 19.5 H9.5" stroke="#bdd7e1" stroke-width="1"/><path d="M9.2 18.8 L10.6 14.2 L17.3 4.6 L20 6.6 L13.4 16.2 Z" fill="#bdd7e1"/><path d="M16.2 6.2 L18.9 8.2" stroke="#fff" stroke-width="0.8"/></svg>
<svg style="left:222px;top:220px" width="24" height="24" viewBox="0 0 24 24"><path d="M13.2 7.7 H3.6 V16.7 H19.4 V11.2" fill="none" stroke="#bdd7e1" stroke-width="1.3"/><path d="M11.5 16.7 V19.2 M8 19.5 H15" stroke="#bdd7e1" stroke-width="1.1"/><path d="M6.8 14 H11.2" stroke="#bdd7e1" stroke-width="0.9"/><path d="M10.9 14.6 L12.1 11.6 L17.8 3.9 L20.3 5.8 L14.6 13.5 Z" fill="#bdd7e1"/></svg>
<svg style="left:222px;top:248px" width="24" height="24" viewBox="0 0 24 24"><rect x="8.3" y="4.3" width="7.3" height="2.8" fill="#bdd7e1"/><path d="M11.2 7 V11.5 M6.2 16.6 V11.5 H14 M17.3 16.6 V13.5" fill="none" stroke="#bdd7e1" stroke-width="1.1"/><rect x="3" y="16.6" width="7" height="3.1" fill="#bdd7e1"/><rect x="13.3" y="16.6" width="7.5" height="3.1" fill="#bdd7e1"/><path d="M13.6 14.2 L14.6 11.2 L18.6 4.8 L20.8 6.3 L16.8 12.6 Z" fill="#bdd7e1" stroke="#fff" stroke-width="0.6"/></svg>
<svg style="left:222px;top:276px" width="24" height="24" viewBox="0 0 24 24"><path d="M4 4.2 H18 L19.8 6 V19.6 H4 Z" fill="#bdd7e1"/><rect x="6.2" y="7.7" width="11.4" height="5.2" fill="#fff"/><rect x="6.2" y="14" width="11.4" height="4.5" fill="#fff"/><rect x="11.3" y="5.2" width="1.5" height="2" fill="#fff"/></svg>
<svg style="left:222px;top:304px" width="24" height="24" viewBox="0 0 24 24"><circle cx="12" cy="12" r="8" fill="#707070"/><path d="M8.9 8.9 L15.1 15.1 M15.1 8.9 L8.9 15.1" stroke="#fff" stroke-width="2.3"/></svg>
<svg style="left:222px;top:332px" width="24" height="24" viewBox="0 0 24 24"><circle cx="7.5" cy="16" r="3.3" fill="#bdd7e1"/><path d="M8.3 5.6 V12.6 M8.3 6 H12.6 M8.3 9.4 H12 M8.3 11.6 H13.4 M10.8 18.2 H16 V12" fill="none" stroke="#bdd7e1" stroke-width="1"/><circle cx="15.9" cy="8.3" r="3.7" fill="#fff" stroke="#bdd7e1" stroke-width="1.1"/><path d="M14.1 8.3 L15.5 9.8 L17.9 6.8" fill="none" stroke="#bdd7e1" stroke-width="1.2"/></svg>
<svg style="left:222px;top:360px" width="24" height="24" viewBox="0 0 24 24"><path d="M4 12.5 H8.4 M6.3 12.5 V17 M8 5.6 L9.6 6.6 M17 14.5 V17" fill="none" stroke="#bdd7e1" stroke-width="1.1"/><rect x="3.3" y="17" width="6.8" height="2.9" fill="#bdd7e1"/><rect x="13.3" y="17" width="7.5" height="2.9" fill="#bdd7e1"/><circle cx="14.2" cy="9.7" r="5" fill="#fff" stroke="#bdd7e1" stroke-width="1.3"/><path d="M11.7 9.7 L13.6 11.8 L16.9 7.6" fill="none" stroke="#bdd7e1" stroke-width="1.5"/></svg>
<svg style="left:222px;top:388px" width="24" height="24" viewBox="0 0 24 24"><path d="M11.9 4.1 L18 10.9 H13.9 V19.5 H10 V10.9 H5.8 Z" fill="#7c7c7c"/></svg>
<svg style="left:222px;top:416px" width="24" height="24" viewBox="0 0 24 24"><path d="M4.4 16.1 C7.6 13.6 6.4 6 11 4 C15.6 6 14.6 13.6 17.8 16.1 Z" fill="#bdd7e1"/><circle cx="11.3" cy="18.6" r="1.1" fill="#bdd7e1"/><circle cx="16.1" cy="7.4" r="3.8" fill="#bdd7e1" stroke="#fff" stroke-width="0.9"/><path d="M14.5 5.8 L17.7 9 M17.7 5.8 L14.5 9" stroke="#fff" stroke-width="1"/></svg>
<svg style="left:222px;top:444px" width="24" height="24" viewBox="0 0 24 24"><path d="M9.6 5 A7 7 0 0 1 18.6 12.4" fill="none" stroke="#bdd7e1" stroke-width="1.1"/><path d="M17 11.6 L18.7 14.2 L20.2 11.6 Z" fill="#bdd7e1"/><path d="M6 16.6 A7 7 0 0 1 5 9.6" fill="none" stroke="#bdd7e1" stroke-width="1.1"/><path d="M3.6 10.6 L5.2 7.8 L6.8 10.4 Z" fill="#bdd7e1"/><path d="M9 5.4 L12.4 13.4" stroke="#bdd7e1" stroke-width="1.3"/><path d="M7.6 19.4 C10.6 17.6 10.8 15 12.6 13 L16.2 15 C17.4 16.8 18.6 18.4 20.2 19.4 Z" fill="#bdd7e1"/></svg>
<svg style="left:222px;top:472px" width="24" height="24" viewBox="0 0 24 24"><path d="M8.4 5.5 V15.2 A5.6 1.6 0 0 0 19.6 15.2 V5.5" fill="none" stroke="#bdd7e1" stroke-width="1.1"/><ellipse cx="14" cy="5.5" rx="5.6" ry="1.6" fill="#fff" stroke="#bdd7e1" stroke-width="1.1"/><path d="M4.3 5.3 L7.8 15.2" stroke="#bdd7e1" stroke-width="1.2"/><path d="M6.2 14.8 L9.7 13.9 C10.6 16.4 11.8 18.4 13.4 19.7 H4.8 C6 18.4 6.4 16.6 6.2 14.8 Z" fill="#bdd7e1"/></svg>
<svg style="left:222px;top:511px" width="24" height="24" viewBox="0 0 24 24"><circle cx="12" cy="12.2" r="7.9" fill="#bdd7e1"/><path d="M12 7.2 V17.2 M7 12.2 H17" stroke="#fff" stroke-width="2.4"/></svg>
<svg style="left:222px;top:539px" width="24" height="24" viewBox="0 0 24 24"><path d="M2 4 L21.2 12 L2 20 Z" fill="#bdd7e1"/></svg>
<svg style="left:222px;top:567px" width="24" height="24" viewBox="0 0 24 24"><path d="M21.6 3.8 L2.4 11.8 L21.6 20 Z" fill="#bdd7e1"/></svg>
</body></html>
